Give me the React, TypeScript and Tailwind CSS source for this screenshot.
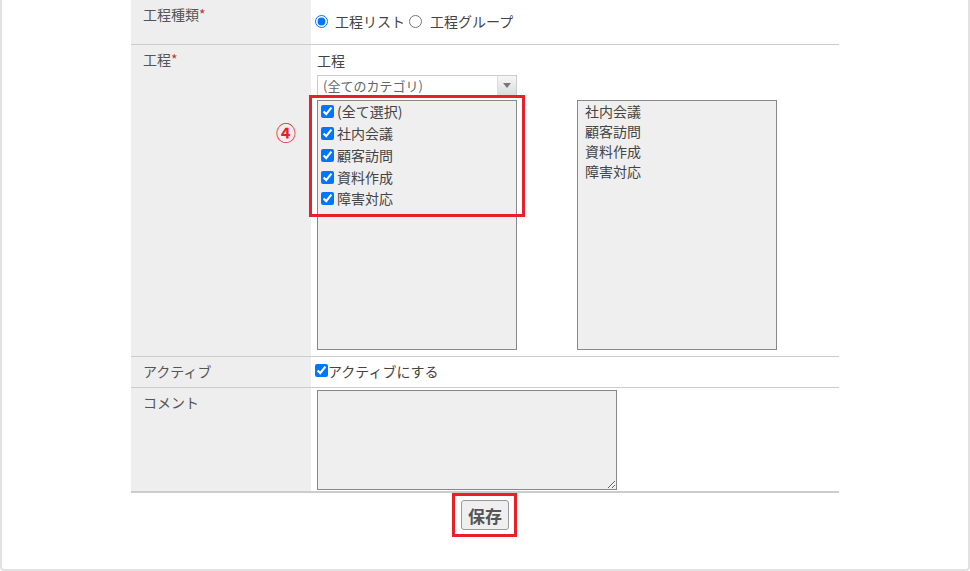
import { useState } from 'react';

const font = { fontFamily: '"Noto Sans CJK JP", "Noto Sans", sans-serif' };

const processes = ['社内会議', '顧客訪問', '資料作成', '障害対応'];

function Label({ text, required }: { text: string; required?: boolean }) {
  return (
    <div className="w-[180px] shrink-0 bg-[#eeeeee] pl-3 pt-[4px] text-[14px] leading-[20px] text-[#555]">
      {text}
      {required && <span className="text-[#c0392b]">*</span>}
    </div>
  );
}

export default function App() {
  const [kind, setKind] = useState<'list' | 'group'>('list');
  const [active, setActive] = useState(true);
  const [checked, setChecked] = useState<Record<string, boolean>>(
    Object.fromEntries(processes.map((p) => [p, true]))
  );
  const allChecked = processes.every((p) => checked[p]);

  const toggleAll = () => {
    const next = !allChecked;
    setChecked(Object.fromEntries(processes.map((p) => [p, next])));
  };

  return (
    <div className="w-[970px] h-[571px] bg-white overflow-hidden" style={font}>
      <div className="h-[571px] border-x-2 border-b-2 border-[#e2e2e2] rounded-b-[4px] pl-[129px]">
        <div className="relative w-[708px]">
          {/* 工程種類 */}
          <div className="flex h-[45px] border-b border-[#cccccc]">
            <Label text="工程種類" required />
            <div className="flex items-center pl-1 pt-[9px] h-[34px] text-[14px] text-[#444]">
              <label className="flex items-center">
                <input
                  type="radio"
                  name="kind"
                  checked={kind === 'list'}
                  onChange={() => setKind('list')}
                />
                <span className="ml-[7px]">工程リスト</span>
              </label>
              <label className="flex items-center ml-[4px]">
                <input
                  type="radio"
                  name="kind"
                  checked={kind === 'group'}
                  onChange={() => setKind('group')}
                />
                <span className="ml-[8px]">工程グループ</span>
              </label>
            </div>
          </div>

          {/* 工程 */}
          <div className="flex h-[312px] border-b border-[#cccccc]">
            <Label text="工程" required />
            <div className="pl-[6px] pt-[5px]">
              <div className="text-[14px] leading-[20px] text-[#444]">工程</div>
              <div className="mt-[5px] flex h-[21px] w-[200px] border border-[#cccccc] bg-white">
                <div className="flex-1 pl-[5px] text-[13px] leading-[19px] text-[#666]">(全てのカテゴリ)</div>
                <div className="flex w-[19px] items-center justify-center border-l border-[#dddddd] bg-gradient-to-b from-[#f6f6f6] to-[#dcdcdc]">
                  <span className="block h-0 w-0 border-x-[4px] border-t-[5px] border-x-transparent border-t-[#777]" />
                </div>
              </div>
              <div className="mt-[4px] flex gap-[60px]">
                <div className="h-[250px] w-[200px] border border-[#888888] bg-[#efefef] pl-[3px] text-[14px] text-[#444]">
                  <label className="flex h-[21.75px] items-center">
                    <input type="checkbox" checked={allChecked} onChange={toggleAll} />
                    <span className="ml-[3px]">(全て選択)</span>
                  </label>
                  {processes.map((p) => (
                    <label key={p} className="flex h-[21.75px] items-center">
                      <input
                        type="checkbox"
                        checked={!!checked[p]}
                        onChange={() => setChecked({ ...checked, [p]: !checked[p] })}
                      />
                      <span className="ml-[3px]">{p}</span>
                    </label>
                  ))}
                </div>
                <div className="h-[250px] w-[200px] border border-[#888888] bg-[#efefef] pl-[7px] text-[14px] leading-[20px] text-[#444]">
                  {processes
                    .filter((p) => checked[p])
                    .map((p) => (
                      <div key={p}>{p}</div>
                    ))}
                </div>
              </div>
            </div>
          </div>

          {/* アクティブ */}
          <div className="flex h-[31px] border-b border-[#cccccc]">
            <Label text="アクティブ" />
            <label className="flex items-start pl-1 pt-[7px] text-[14px] leading-[14px] text-[#444]">
              <input type="checkbox" checked={active} onChange={() => setActive(!active)} />
              <span>アクティブにする</span>
            </label>
          </div>

          {/* コメント */}
          <div className="flex h-[105px] border-b-2 border-[#cccccc]">
            <Label text="コメント" />
            <div className="pl-[6px] pt-[2px]">
              <textarea className="block h-[100px] w-[300px] border border-[#888888] bg-[#efefef] text-[14px] outline-none" />
            </div>
          </div>

          <div className="flex justify-center pt-[7px]">
            <div className="relative">
              <button className="h-[30px] w-[48px] rounded-[3px] border border-[#999] bg-[#efefef] text-[17px] font-bold leading-none text-[#555]">
                保存
              </button>
              <div className="pointer-events-none absolute -left-[9px] -right-[8px] -top-[7px] -bottom-[7px] border-[3px] border-[#e8202a]" />
            </div>
          </div>

          {/* annotation */}
          <div className="pointer-events-none absolute left-[178px] top-[95px] h-[122px] w-[216px] border-[3px] border-[#e8202a]" />
          <div className="pointer-events-none absolute left-[145px] top-[119px] text-[20px] font-bold leading-[28px] text-[#e8202a]">
            ④
          </div>
        </div>
      </div>
    </div>
  );
}
